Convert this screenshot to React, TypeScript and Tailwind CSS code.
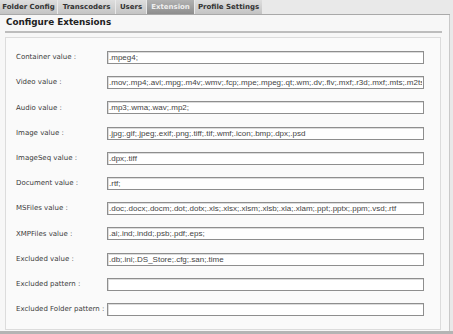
import React from "react";

const tabs: { label: string; w: string; active?: boolean }[] = [
  { label: "Folder Config", w: "w-[57px]" },
  { label: "Transcoders", w: "w-[57px]" },
  { label: "Users", w: "w-[30px]" },
  { label: "Extension", w: "w-[47px]", active: true },
  { label: "Profile Settings", w: "w-[67px]" },
];

const rows: [string, string][] = [
  ["Container value :", ".mpeg4;"],
  [
    "Video value :",
    ".mov;.mp4;.avi;.mpg;.m4v;.wmv;.fcp;.mpe;.mpeg;.qt;.wm;.dv;.flv;.mxf;.r3d;.mxf;.mts;.m2ts",
  ],
  ["Audio value :", ".mp3;.wma;.wav;.mp2;"],
  ["Image value :", ".jpg;.gif;.jpeg;.exif;.png;.tiff;.tif;.wmf;.icon;.bmp;.dpx;.psd"],
  ["ImageSeq value :", ".dpx;.tiff"],
  ["Document value :", ".rtf;"],
  [
    "MSFiles value :",
    ".doc;.docx;.docm;.dot;.dotx;.xls;.xlsx;.xlsm;.xlsb;.xla;.xlam;.ppt;.pptx;.ppm;.vsd;.rtf",
  ],
  ["XMPFiles value :", ".ai;.ind;.indd;.psb;.pdf;.eps;"],
  ["Excluded value :", ".db;.ini;.DS_Store;.cfg;.san;.time"],
  ["Excluded pattern :", ""],
  ["Excluded Folder pattern :", ""],
];

export default function App() {
  return (
    <div className="w-[453px] h-[334px] overflow-hidden bg-[#e9e9e9] font-['DejaVu_Sans',sans-serif] flex flex-col">
      {/* Tabs */}
      <div className="flex h-[14px] gap-[1px] shrink-0">
        {tabs.map((t) => (
          <div
            key={t.label}
            className={`${t.w} h-[14px] flex items-center justify-center text-[7px] font-bold whitespace-nowrap ${
              t.active
                ? "bg-gradient-to-b from-[#b2b2b2] to-[#8e8e8e] text-[#eeeeee]"
                : "bg-gradient-to-b from-[#dedede] to-[#c4c4c4] text-[#333333]"
            }`}
          >
            {t.label}
          </div>
        ))}
      </div>
      <div className="h-[1px] w-[450px] bg-[#a9a9a9] shrink-0" />
      {/* Panel */}
      <div className="w-[450px] h-[316px] shrink-0 bg-[#f7f7f7] border-r border-[#c9c9c9] px-[5px] flex flex-col">
        <div className="h-[16px] flex items-center pl-[1px] text-[8.8px] font-bold text-[#222222] whitespace-nowrap">
          Configure Extensions
        </div>
        <div className="h-[2px] w-[437px] bg-[#bdbdbd]" />
        <div className="mt-[4px] w-[436px] h-[293px] border border-[#dcdcdc] bg-[#fafafa] pl-[10px] pt-[13px] flex flex-col gap-[12.2px]">
          {rows.map(([label, value]) => (
            <div key={label} className="flex items-center h-[13px]">
              <div className="w-[91px] text-[7px] text-[#3a3a3a] whitespace-nowrap">{label}</div>
              <input
                readOnly
                value={value}
                className="w-[317px] h-[13px] border border-[#8e8e8e] bg-white px-[1px] text-[8px] leading-none text-[#444444] font-['Liberation_Sans',Arial,sans-serif] outline-none shadow-[inset_1px_1px_0_#dcdcdc]"
              />
            </div>
          ))}
        </div>
      </div>
      <div className="h-[3px] w-[453px] bg-[#b4b4b4] shrink-0" />
    </div>
  );
}
